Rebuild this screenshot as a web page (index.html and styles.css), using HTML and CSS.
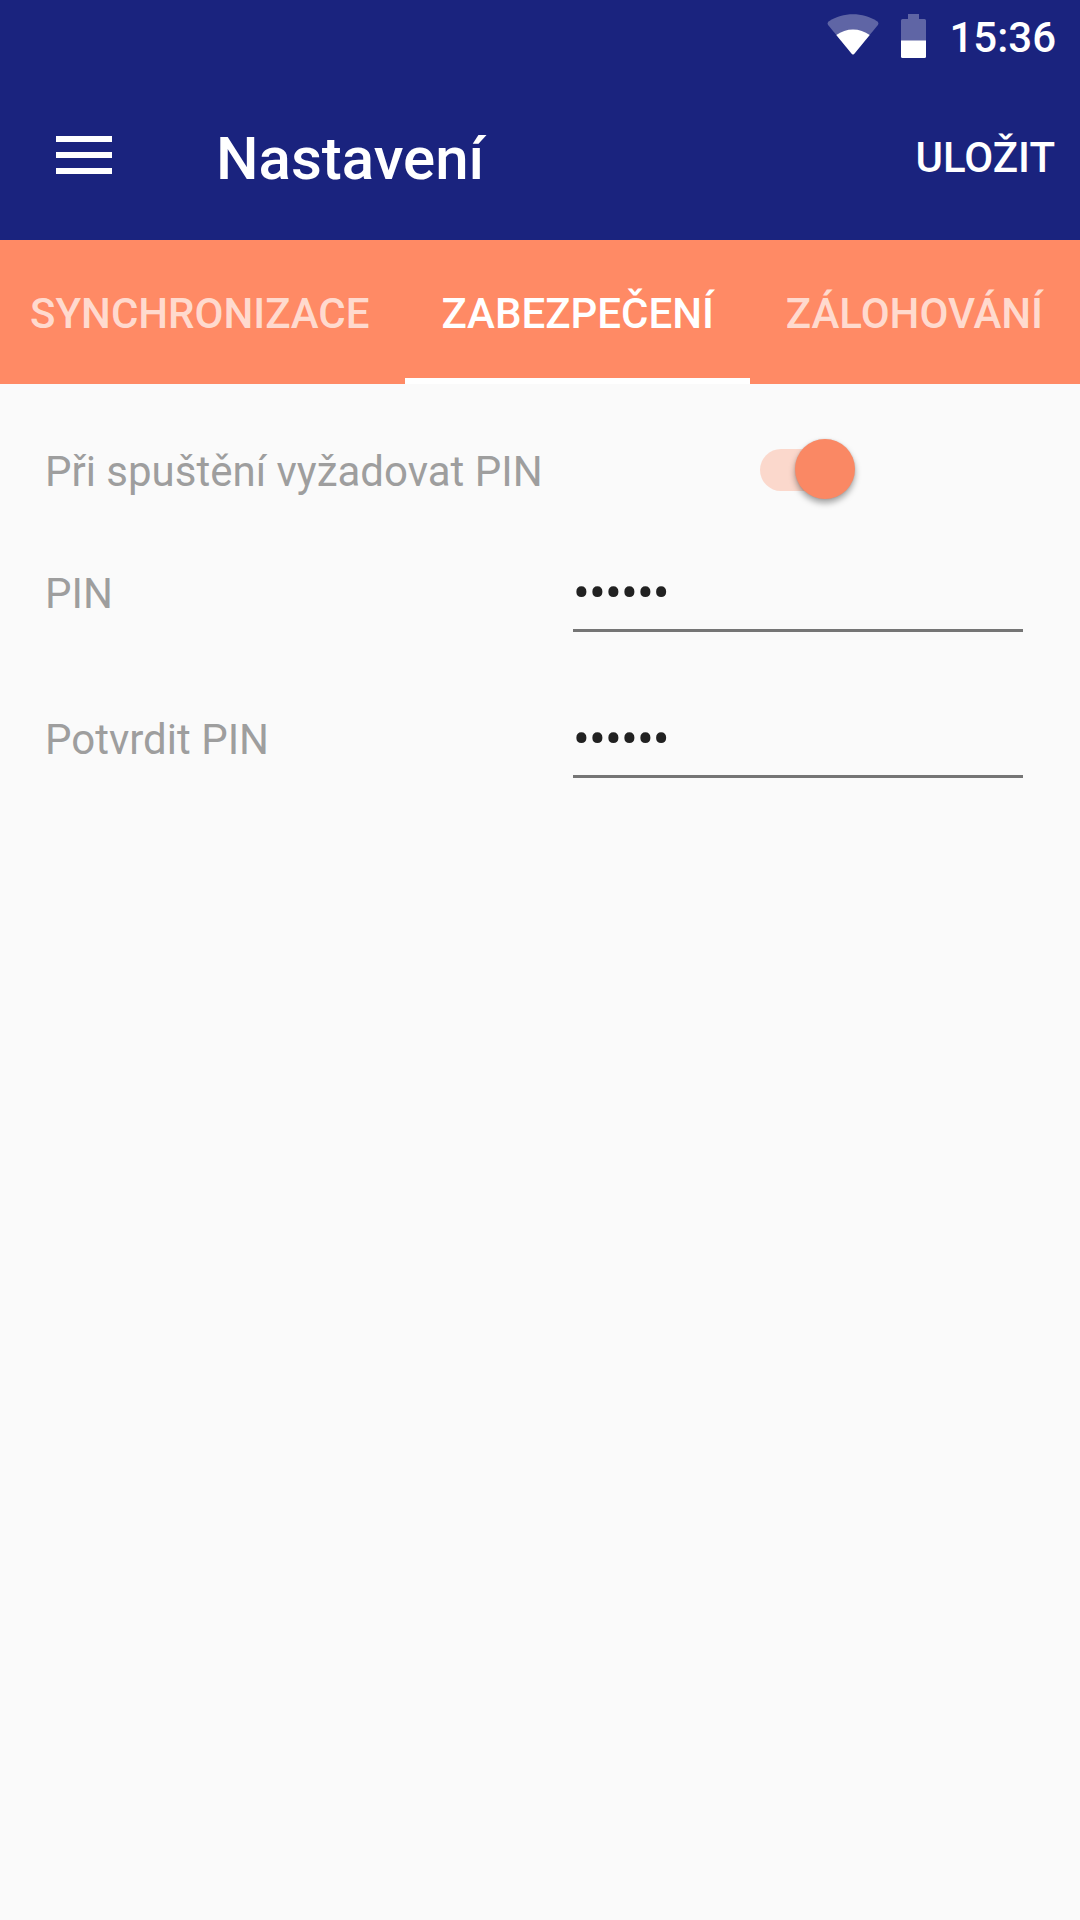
FILE: index.html
```html
<!DOCTYPE html>
<html lang="cs">
<head>
	<title>Nastavení</title>
	<meta charset="UTF-8">
	<link rel="stylesheet" href="styles.css">
</head>
<body>
	<header class="header">
		<div class="status-bar">
			<svg class="wifi" width="52" height="42" viewBox="0 0 52 42">
				<path d="M1.5 11.5 Q-.5 9 2 7.3 C16-2 36-2 50 7.3 Q52.500 9 50.500 11.500 L27.500 39.500 Q26 41.300 24.500 39.500 Z" fill="#fff" fill-opacity=".3"/>
				<path d="M9.300 21 C19 13.500 33 13.500 42.700 21 L27.500 39.500 Q26 41.300 24.500 39.500 Z" fill="#fff"/>
			</svg>
			<svg class="battery" width="25" height="44" viewBox="0 0 25 44">
				<path d="M7 0H18V5H23.500Q25 5 25 6.500V27H0V6.500Q0 5 1.500 5H7Z" fill="#fff" fill-opacity=".3"/>
				<path d="M0 26.500H25V42.500Q25 44 23.500 44H1.500Q0 44 0 42.500Z" fill="#fff"/>
			</svg>
			<span class="time">15:36</span>
		</div>
		<div class="toolbar">
			<svg class="menu" width="56" height="38" viewBox="0 0 56 38">
				<path d="M0 0H56V6H0ZM0 16H56V22H0ZM0 32H56V38H0Z" fill="#fff"/>
			</svg>
			<h1>Nastavení</h1>
			<a class="save">ULOŽIT</a>
		</div>
	</header>

	<nav class="tabs">
		<a class="tab">SYNCHRONIZACE</a>
		<a class="tab active">ZABEZPEČENÍ</a>
		<a class="tab">ZÁLOHOVÁNÍ</a>
	</nav>

	<main class="settings">
		<div class="row row-switch">
			<span class="label">Při spuštění vyžadovat PIN</span>
			<div class="switch"><div class="thumb"></div></div>
		</div>
		<div class="row">
			<label class="label" for="pin">PIN</label>
			<input class="pin-input" type="password" id="pin" value="123456">
		</div>
		<div class="row">
			<label class="label" for="pin-confirm">Potvrdit PIN</label>
			<input class="pin-input" type="password" id="pin-confirm" value="123456">
		</div>
	</main>
</body>
</html>
```
FILE: styles.css
```css
* {
	box-sizing: border-box;
}

body {
	margin: 0;
	min-height: 1920px;
	background-color: #fafafa;
	font-family: Roboto, sans-serif;
	font-size: 42px;
	line-height: 50px;
	overflow: hidden;
}

.header {
	height: 240px;
	background-color: #1a237e;
	color: #fff;
	font-weight: 500;
}

.status-bar {
	display: flex;
	justify-content: flex-end;
	align-items: flex-start;
	height: 72px;
	padding: 13px 24px 0 0;
}

.wifi {
	margin: 1px 22px 0 0;
}

.battery {
	margin: 1px 23px 0 0;
}

.toolbar {
	display: flex;
	align-items: center;
	height: 168px;
	padding: 0 25px 0 56px;
}

.menu {
	margin: -2px 104px 0 0;
}

h1 {
	margin: 5px 0 0;
	font-size: 60px;
	font-weight: 500;
	line-height: 70px;
}

.save {
	margin: 3px 0 0 auto;
}

.tabs {
	display: flex;
	justify-content: flex-end;
	height: 144px;
	background-color: #ff8a65;
}

.tab {
	flex: none;
	height: 144px;
	padding: 49px 36px 0;
	color: rgba(255, 255, 255, 0.7);
	font-weight: 500;
}

.tab:last-child {
	padding-right: 37px;
}

.tab.active {
	border-bottom: 6px solid #fff;
	color: #fff;
}

.settings {
	padding: 39px 57px 0 45px;
}

.row {
	display: grid;
	grid-template-columns: 528px 450px;
	height: 146px;
	align-items: start;
}

.row-switch {
	height: 122px;
}

.label {
	padding-top: 24px;
	color: #9e9e9e;
}

.switch {
	display: flex;
	width: 92px;
	height: 42px;
	margin: 26px 0 0 187px;
	border-radius: 21px;
	background-color: #fbd8cc;
}

.thumb {
	flex: none;
	width: 60px;
	height: 60px;
	margin: -10px 0 0 35px;
	border-radius: 50%;
	background-color: #fa8864;
	box-shadow: 0 4px 6px rgba(0, 0, 0, 0.35), 0 0 2px rgba(0, 0, 0, 0.12);
}

.pin-input {
	width: 450px;
	height: 87px;
	padding: 11px 0 0;
	border: 0;
	border-bottom: 3px solid #757575;
	outline: 0;
	background: none;
	color: #212121;
	font-family: Roboto, sans-serif;
	font-size: 50px;
	letter-spacing: -0.9px;
}
```
